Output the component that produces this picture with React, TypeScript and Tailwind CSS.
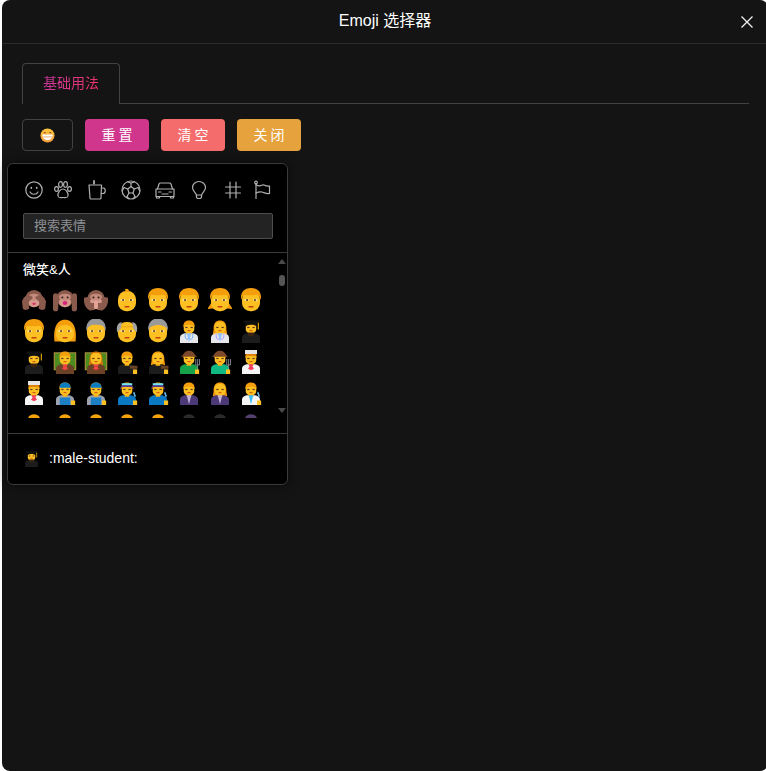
const Y = '#fdc023';
const SKIN = '#f7ae14';
const HAIR = '#f59e0b';

// Small emoji drawings on a 32 box, the sprite sheet of the reference is not available
const Eyes = ({ y = 13 }: { y?: number }) => (
  <>
    <rect x="7.5" y={y} width="5.5" height="2.2" fill="#fff" opacity="0.65" />
    <rect x="19" y={y} width="5.5" height="2.2" fill="#fff" opacity="0.65" />
    <rect x="9.5" y={y} width="2.5" height="2.2" fill="#5b3a1e" />
    <rect x="20" y={y} width="2.5" height="2.2" fill="#5b3a1e" />
  </>
);

const Monkey = ({ kind }: { kind: 'see' | 'hear' | 'speak' }) => (
  <svg viewBox="0 0 32 32" className="h-6 w-6">
    <circle cx="16" cy="14" r="11.5" fill="#8a5a4c" />
    <ellipse cx="16" cy="19" rx="8" ry="6.5" fill="#d49a8c" />
    <ellipse cx="16" cy="12" rx="8" ry="4.5" fill="#c48a7c" />
    {kind !== 'see' && (
      <>
        <circle cx="12.5" cy="12.5" r="1.3" fill="#2b1b14" />
        <circle cx="19.5" cy="12.5" r="1.3" fill="#2b1b14" />
      </>
    )}
    {kind === 'see' && <ellipse cx="16" cy="21" rx="2.5" ry="1.5" fill="#d6336c" />}
    {kind === 'hear' && <ellipse cx="16" cy="20" rx="3.2" ry="2.6" fill="#d6247c" />}
    {kind === 'see' && (
      <>
        <path d="M0 18 C3 8 12 8 14.5 13 L11 16.5 C8 17 9 24 10 27 C7 30 2 30 1 27Z" fill="#8a5a4c" />
        <path d="M32 18 C29 8 20 8 17.5 13 L21 16.5 C24 17 23 24 22 27 C25 30 30 30 31 27Z" fill="#8a5a4c" />
      </>
    )}
    {kind === 'hear' && (
      <>
        <rect x="0" y="7" width="7" height="24" rx="3.5" fill="#8a5a4c" />
        <rect x="25" y="7" width="7" height="24" rx="3.5" fill="#8a5a4c" />
      </>
    )}
    {kind === 'speak' && (
      <>
        <path d="M0 13 C-1 21 3 29 9 30 L15 29 L15 20 L9 20 L5 12Z" fill="#8a5a4c" />
        <path d="M32 13 C33 21 29 29 23 30 L17 29 L17 20 L23 20 L27 12Z" fill="#8a5a4c" />
        <rect x="13.5" y="17" width="5" height="11" rx="2" fill="#e8a59a" />
      </>
    )}
  </svg>
);

type FaceStyle = 'bald' | 'boy' | 'pig' | 'man' | 'woman' | 'grey' | 'oldman' | 'granny';

const Face = ({ style }: { style: FaceStyle }) => {
  const hair = style === 'grey' || style === 'granny' ? '#9a9a9a' : style === 'oldman' ? '#a3a3a3' : HAIR;
  return (
    <svg viewBox="0 0 32 32" className="h-6 w-6">
      {style === 'woman' && <path d="M2 30 C0 14 4 1 16 1 C28 1 32 14 30 30Z" fill={HAIR} />}
      {style === 'pig' && (
        <>
          <path d="M5 19 L-1 28 L9 27Z" fill={HAIR} />
          <path d="M27 19 L33 28 L23 27Z" fill={HAIR} />
        </>
      )}
      {(style === 'grey' || style === 'granny') && <circle cx="16" cy="12" r="13" fill={hair} />}
      <rect x="4" y="4" width="24" height="27" rx="11" fill={Y} />
      {style === 'bald' && <path d="M13 2 Q17 -1 19 4 L15 6Z" fill={HAIR} />}
      {(style === 'boy' || style === 'man' || style === 'pig') && (
        <path d="M3 16 C1 5 8 0 16 0 C25 0 31 6 29 16 C28 12 26 9 23 9 C18 10 11 10 8 9 C5 10 4 12 3 16Z" fill={HAIR} />
      )}
      {style === 'woman' && <path d="M5 16 C6 10 11 8 16 8 C21 8 26 10 27 16 C29 8 23 3 16 3 C9 3 3 8 5 16Z" fill={HAIR} />}
      {style === 'grey' && <path d="M4 15 C5 8 12 6 25 9 C27 11 28 13 28 15 C30 6 23 1 16 1 C9 1 2 7 4 15Z" fill={hair} />}
      {style === 'oldman' && (
        <>
          <path d="M3 18 C1 10 4 5 9 4 L8 12Z" fill={hair} />
          <path d="M29 18 C31 10 28 5 23 4 L24 12Z" fill={hair} />
          <rect x="8" y="10" width="16" height="1" fill="#e59e0b" />
        </>
      )}
      {style === 'granny' && <path d="M3 14 C7 6 25 6 29 14 C29 5 23 0 16 0 C9 0 3 5 3 14Z" fill={hair} />}
      <Eyes y={15} />
      <rect x="12.5" y="24" width="7" height="2" rx="1" fill="#c2410c" />
    </svg>
  );
};

type Job = {
  body: string;
  accent?: string;
  long?: boolean;
  hat?: 'grad' | 'chef' | 'cap' | 'visor' | 'brim';
  board?: boolean;
  item?: 'steth' | 'gavel' | 'fork' | 'tie' | 'bib' | 'tool';
  lapel?: string;
};

const Person = ({ job, size = 'h-6 w-6' }: { job: Job; size?: string }) => (
  <svg viewBox="0 0 32 32" className={size}>
    {job.board && (
      <>
        <rect x="1" y="3" width="30" height="24" fill="#a78b3c" />
        <rect x="2.5" y="4.5" width="27" height="21" fill="#4d8a1f" />
      </>
    )}
    {job.long && <path d="M7.5 14 C7 5 11 2 16 2 C21 2 25 5 24.5 14 L25.5 20 L6.5 20Z" fill={job.board ? '#d97706' : HAIR} />}
    <path d="M4 32 L4 25 C4 21 8 19 12 19 L20 19 C24 19 28 21 28 25 L28 32Z" fill={job.body} />
    <rect x="13" y="15" width="6" height="6" fill={SKIN} />
    <rect x="9" y="4" width="14" height="15" rx="5.5" fill={Y} />
    {!job.long && <path d="M8.5 11 C8 4 12 2 16 2 C20 2 24 4 23.5 11 C22.5 8.5 20 7.5 16 7.5 C12 7.5 9.5 8.5 8.5 11Z" fill={job.hat === 'grad' ? '#111' : HAIR} />}
    <rect x="11" y="10.5" width="3" height="1.6" fill="#5b3a1e" />
    <rect x="18" y="10.5" width="3" height="1.6" fill="#5b3a1e" />
    <rect x="14" y="15" width="4" height="1.2" fill="#c2410c" />
    {job.hat === 'grad' && (
      <>
        <rect x="6" y="2" width="20" height="3.5" fill="#111" />
        <rect x="25" y="5" width="1.6" height="9" fill="#d6a400" />
        <path d="M11 18 L21 18 L19 23 L13 23Z" fill="#3b2412" />
      </>
    )}
    {job.hat === 'chef' && (
      <>
        <rect x="8" y="0" width="16" height="5.5" fill="#e5e5e5" />
        <rect x="9" y="5.5" width="14" height="2" fill="#d97706" />
      </>
    )}
    {job.hat === 'cap' && <path d="M9 8 C9 0 23 0 23 8 L25 9 L9 9Z" fill="#0a7cc4" />}
    {job.hat === 'visor' && (
      <>
        <path d="M7 12 C6 1 26 1 25 12 L23 8 L9 8Z" fill="#5c3a8c" />
        <rect x="9" y="3" width="14" height="2.5" fill="#67e8f9" />
      </>
    )}
    {job.hat === 'brim' && <path d="M5 9 C9 7 9 1 16 1 C23 1 23 7 27 9 L23 9 L9 9Z" fill="#7c4a2a" />}
    {job.lapel && <path d="M13 19 L16 31 L19 19Z" fill={job.lapel} />}
    {job.accent && job.item === 'bib' && <rect x="9" y="22" width="14" height="10" fill={job.accent} />}
    {job.accent && job.item === 'steth' && <path d="M11 20 C10 28 15 28 15 26 M21 20 C22 28 17 28 17 26" stroke={job.accent} strokeWidth="1.2" fill="none" />}
    {job.item === 'tie' && <path d="M13 19 L19 19 L18 22 L20 25 L16 27 L12 25 L14 22Z" fill={job.accent ?? '#ef4444'} />}
    {job.item === 'gavel' && <rect x="20" y="21" width="10" height="4" fill="#6b4226" />}
    {job.item === 'fork' && <path d="M25 12 V20 M27.5 12 V20 M30 12 V20 M25 20 H30 M27.5 20 V27" stroke="#9ca3af" strokeWidth="1" fill="none" />}
    {job.item === 'tool' && <path d="M25 15 L27 21" stroke="#67b8e8" strokeWidth="2.2" />}
    {job.item && job.item !== 'steth' && job.item !== 'tie' && <rect x="24" y="26" width="5.5" height="6" fill={Y} />}
  </svg>
);

const doctor: Job = { body: '#e5e7eb', accent: '#60a5fa', item: 'steth', lapel: '#93c5fd' };
const grad: Job = { body: '#1c1c1c', hat: 'grad' };
const teacher: Job = { body: '#6b4226', board: true, accent: '#ef4444', item: 'tie' };
const judge: Job = { body: '#1c1c1c', item: 'gavel' };
const farmer: Job = { body: '#16a34a', accent: '#2b7fc9', item: 'fork', hat: 'brim' };
const chef: Job = { body: '#f5f5f5', hat: 'chef', accent: '#f43f5e', item: 'tie' };
const mech: Job = { body: '#9ca3af', hat: 'cap', accent: '#1d7fc4', item: 'bib' };
const worker: Job = { body: '#0a78c2', hat: 'visor', item: 'tool' };
const biz: Job = { body: '#4c3a78', lapel: '#c4b5d8' };
const sci: Job = { body: '#f5f5f5', lapel: '#38bdf8', item: 'tool' };

const CUT = [...Array(5).fill('#f5a30b'), '#2b2b2b', '#2b2b2b', '#54406e'];

// Icons of the category bar
const stroke = {
  fill: 'none',
  stroke: '#b0b0b0',
  strokeWidth: 1.2,
  strokeLinecap: 'round' as const,
  strokeLinejoin: 'round' as const,
};

const CategoryIcons = () => (
  <div className="flex items-center pl-[16px] pt-[16px]">
    <svg viewBox="0 0 20 20" className="h-5 w-5" {...stroke}>
      <circle cx="10" cy="10" r="8.2" />
      <path d="M6 12 C7.5 15 12.5 15 14 12" />
      <path d="M7.3 7.5 V8.3 M12.7 7.5 V8.3" strokeWidth="1.6" />
    </svg>
    <svg viewBox="0 0 20 20" className="ml-[9px] h-5 w-5" {...stroke}>
      <ellipse cx="3.5" cy="9" rx="1.9" ry="2.4" />
      <ellipse cx="7.5" cy="4.5" rx="1.9" ry="2.8" />
      <ellipse cx="12.5" cy="4.5" rx="1.9" ry="2.8" />
      <ellipse cx="16.5" cy="9" rx="1.9" ry="2.4" />
      <path d="M10 9 C7 9 4.5 13 5 16 C5.5 18.5 8.5 17.5 10 17.5 C11.5 17.5 14.5 18.5 15 16 C15.5 13 13 9 10 9Z" />
    </svg>
    <svg viewBox="0 0 20 20" className="ml-[14px] h-5 w-5" {...stroke}>
      <path d="M2 5 H14.5 L14 18 C14 18.6 13.5 19 13 19 H4 C3.4 19 3 18.6 3 18Z" />
      <path d="M14.5 8 H16 C19 8 19 13.5 16 13.5 H14.2" />
      <path d="M7 1 V3.5" strokeWidth="1.8" />
    </svg>
    <svg viewBox="0 0 20 20" className="ml-[14px] h-5 w-5" {...stroke}>
      <circle cx="10" cy="10" r="9" />
      <path d="M10 6.5 L13.3 9 L12 13 H8 L6.7 9Z" />
      <path d="M10 6.5 V3 M13.3 9 L17 7.5 M12 13 L14 16.5 M8 13 L6 16.5 M6.7 9 L3 7.5" />
      <path d="M6.5 2 L10 3 L13.5 2 M17 7.5 L18.8 11 M14 16.5 L12 18.8 M6 16.5 L8 18.8 M3 7.5 L1.2 11" />
    </svg>
    <svg viewBox="0 0 20 20" className="ml-[14px] h-5 w-5" {...stroke}>
      <path d="M1 9 H19 V16.5 H1Z" />
      <path d="M2.5 9 L4 4 C4.2 3.2 5 3 5.6 3 H14.4 C15 3 15.8 3.2 16 4 L17.5 9" />
      <path d="M1.5 16.5 V18 H4.5 V16.5 M15.5 16.5 V18 H18.5 V16.5" />
      <path d="M7 14 H13 M3.5 12 H6 M14 12 H16.5" />
    </svg>
    <svg viewBox="0 0 20 20" className="ml-[14px] h-5 w-5" {...stroke}>
      <path d="M7.3 15 C7 12.5 3.5 11 3.5 7.5 C3.5 4 6.5 1.5 10 1.5 C13.5 1.5 16.5 4 16.5 7.5 C16.5 11 13 12.5 12.7 15Z" />
      <path d="M7.5 15 V17 C7.5 18 8.5 18.5 10 18.5 C11.5 18.5 12.5 18 12.5 17 V15" />
    </svg>
    <svg viewBox="0 0 20 20" className="ml-[14px] h-5 w-5" {...stroke}>
      <path d="M7 2 V18 M13 2 V18 M2.5 7 H17.5 M2.5 13 H17.5" />
    </svg>
    <svg viewBox="0 0 20 20" className="ml-[9px] h-5 w-5" {...stroke}>
      <circle cx="4" cy="2.5" r="1.3" />
      <path d="M4 4 V18.5" />
      <path d="M4 4.5 C8 8 10 4 12 5 C14 6 15.5 6.5 17.5 6 V13.5 C14 14 12 12.5 10 12 C8 11.5 6 12 4 13" />
    </svg>
  </div>
);

const GrinEmoji = () => (
  <svg viewBox="0 0 16 16" className="h-[15px] w-[15px]">
    <defs>
      <linearGradient id="grin" x1="0" y1="0" x2="0" y2="1">
        <stop offset="0" stopColor="#ffc83d" />
        <stop offset="1" stopColor="#f59a3c" />
      </linearGradient>
    </defs>
    <circle cx="8" cy="8" r="7.5" fill="url(#grin)" />
    <path d="M2.5 7 H13.5 C13.5 11 11 13 8 13 C5 13 2.5 11 2.5 7Z" fill="#fff" />
    <path d="M2.8 9.5 H13.2" stroke="#d98a3a" strokeWidth="0.7" />
    <path d="M4 5 H6 M10 5 H12" stroke="#6b3a1e" strokeWidth="1" />
  </svg>
);

const ActionButton = ({ label, color }: { label: string; color: string }) => (
  <button type="button" className={`flex h-8 w-16 items-center justify-center rounded pl-[3px] text-sm tracking-[3px] text-white ${color}`}>
    {label}
  </button>
);

const App = () => {
  return (
    <div className="h-[771px] w-[766px] overflow-hidden bg-white font-['Liberation_Sans','Noto_Sans_CJK_SC',sans-serif]">
      <div className="relative ml-[2px] h-[771px] w-[766px] rounded-lg bg-[#141414]">
        <header className="relative flex h-11 items-center justify-center border-b border-[#2b2b2c] pb-[2px] text-base text-white">
          Emoji 选择器
          <svg viewBox="0 0 14 14" className="absolute right-[14px] top-[15px] h-[14px] w-[14px]" fill="none" stroke="#f0f0f0" strokeWidth="1.3">
            <path d="M1.5 1.5 L12.5 12.5 M12.5 1.5 L1.5 12.5" />
          </svg>
        </header>

        <div className="px-5 pt-[19px]">
          <div className="-mr-px flex h-[41px] border-b border-[#414243]">
            <div className="-mb-px flex h-[41px] w-[98px] items-center justify-center rounded-t border border-b-0 border-[#414243] bg-[#141414] pb-[2px] text-sm">
              <span className="bg-linear-to-r from-[#c9359a] to-[#f0306a] bg-clip-text text-transparent">基础用法</span>
            </div>
          </div>

          <div className="mt-[15px] flex gap-3">
            <button type="button" className="flex h-8 w-[51px] items-center justify-center rounded border border-[#414243]">
              <GrinEmoji />
            </button>
            <ActionButton label="重置" color="bg-[#d0378c]" />
            <ActionButton label="清空" color="bg-[#f56c6c]" />
            <ActionButton label="关闭" color="bg-[#e6a23c]" />
          </div>
        </div>

        {/* Picker popover */}
        <div className="absolute left-[5px] top-[163px] flex h-[322px] w-[281px] flex-col rounded-md border border-[#3a3a3a] bg-black shadow-[0_0_12px_rgba(0,0,0,0.6)]">
          <CategoryIcons />
          <div className="ml-[15px] mt-[13px] flex h-[26px] w-[250px] items-center rounded-[2px] border border-[#4c4d4f] bg-[#232323] pl-[10px] text-[13px] text-[#8d9095]">
            搜索表情
          </div>

          <div className="mt-[13px] flex h-[182px] border-y border-[#3a3a3a]">
            <div className="flex-1 pl-[10px]">
              <div className="pl-[5px] pt-[8px] text-[13px] font-medium leading-[17px] text-white">微笑&amp;人</div>
              <div className="mt-[10px] h-[130px] overflow-hidden">
                <div className="grid grid-cols-[repeat(8,31.1px)] auto-rows-[31px] justify-items-center">
                  <Monkey kind="see" />
                  <Monkey kind="hear" />
                  <Monkey kind="speak" />
                  <Face style="bald" />
                  <Face style="boy" />
                  <Face style="boy" />
                  <Face style="pig" />
                  <Face style="man" />

                  <Face style="man" />
                  <Face style="woman" />
                  <Face style="grey" />
                  <Face style="oldman" />
                  <Face style="granny" />
                  <Person job={doctor} />
                  <Person job={{ ...doctor, long: true, accent: '#a78bfa' }} />
                  <Person job={grad} />

                  <Person job={grad} />
                  <Person job={teacher} />
                  <Person job={{ ...teacher, long: true }} />
                  <Person job={judge} />
                  <Person job={{ ...judge, long: true }} />
                  <Person job={farmer} />
                  <Person job={{ ...farmer, body: '#10b981' }} />
                  <Person job={chef} />

                  <Person job={chef} />
                  <Person job={mech} />
                  <Person job={mech} />
                  <Person job={worker} />
                  <Person job={worker} />
                  <Person job={biz} />
                  <Person job={{ ...biz, long: true }} />
                  <Person job={sci} />

                  {CUT.map((c, i) => (
                    <svg key={i} viewBox="0 0 32 32" className="h-6 w-6">
                      <path d="M8 9 C9 1 23 1 24 9Z" fill={c} />
                    </svg>
                  ))}
                </div>
              </div>
            </div>

            {/* Scrollbar */}
            <div className="flex w-[10px] flex-col items-center pt-[6px]">
              <div className="h-0 w-0 border-x-[4px] border-b-[5px] border-x-transparent border-b-[#4a4a4a]" />
              <div className="mt-[11px] h-[11px] w-[6px] rounded-full bg-[#555]" />
              <div className="mt-[122px] h-0 w-0 border-x-[4px] border-t-[5px] border-x-transparent border-t-[#4a4a4a]" />
            </div>
          </div>

          <div className="flex flex-1 items-center pb-[2px] pl-[15px] text-sm text-white">
            <Person job={grad} size="h-[17px] w-[17px]" />
            <span className="ml-[9px]">:male-student:</span>
          </div>
        </div>
      </div>
    </div>
  );
};

export default App;
